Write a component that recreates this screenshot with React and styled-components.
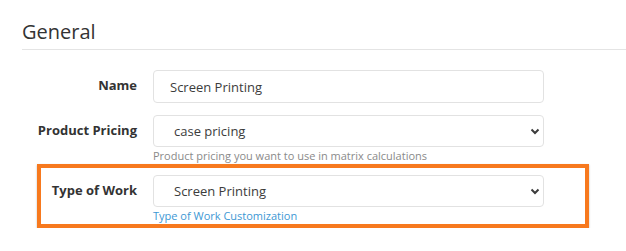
import React from 'react';
import styled, { createGlobalStyle } from 'styled-components';

const GlobalStyle = createGlobalStyle`
  body {
    margin: 0;
    background: #fff;
    font-family: "Open Sans", Lato, sans-serif;
    color: #333;
  }
`;

const Section = styled.section`
  padding: 20px 0 0 22px;
  width: 604px;
`;

const Header = styled.div`
  border-bottom: 1px solid #e4e4e4;
  padding-bottom: 5px;
`;

const Title = styled.h2`
  margin: 0;
  font-size: 20px;
  font-weight: 400;
  line-height: 24px;
  color: #333;
`;

const Fields = styled.div`
  display: flex;
  flex-direction: column;
  padding-top: 20px;
`;

const Row = styled.div`
  display: grid;
  grid-template-columns: ${p => p.$labelWidth}px 391px;
  column-gap: 16px;
  margin-bottom: ${p => p.$gap || 0}px;
`;

const Label = styled.label`
  text-align: right;
  font-size: 13px;
  font-weight: 700;
  color: #333;
  line-height: 30px;
`;

const Control = styled.div`
  display: flex;
  flex-direction: column;
`;

const Input = styled.input`
  box-sizing: border-box;
  height: 33px;
  width: 100%;
  border: 1px solid #e2e2e2;
  border-radius: 4px;
  padding: 0 0 0 16px;
  font-family: inherit;
  font-size: 13px;
  color: #3c3c3c;
  background: #fff;
  outline: none;
`;

const SelectWrap = styled.div`
  position: relative;
`;

const Select = styled.select`
  box-sizing: border-box;
  appearance: none;
  height: 32px;
  width: 100%;
  border: 1px solid #e2e2e2;
  border-radius: 4px;
  padding: 0 0 0 20px;
  font-family: inherit;
  font-size: 13px;
  color: #3c3c3c;
  background: #fff;
  outline: none;
`;

const Chevron = styled.svg`
  position: absolute;
  right: 4px;
  top: 13px;
  pointer-events: none;
`;

const Help = styled.div`
  font-size: 11px;
  line-height: 14px;
  margin-top: 2px;
  color: ${p => (p.$link ? '#3d98d4' : '#8a8a8a')};
`;

const Highlight = styled.div`
  margin: 1px 0 0 15px;
  width: 544px;
  border: 4px solid #f7791e;
  box-shadow: 0 1px 2px rgba(0, 0, 0, 0.25);
  padding: 7px 0 1px;
`;

const Caret = () => (
  <Chevron width="10" height="7" viewBox="0 0 10 7">
    <path d="M1.5 1.5 L5 5 L8.5 1.5" fill="none" stroke="#3c3c3c" strokeWidth="2" />
  </Chevron>
);

const SelectField = ({ value }) => (
  <SelectWrap>
    <Select defaultValue={value}>
      <option>{value}</option>
    </Select>
    <Caret />
  </SelectWrap>
);

export default function App() {
  return (
    <>
      <GlobalStyle />
      <Section>
        <Header>
          <Title>General</Title>
        </Header>
        <Fields>
          <Row $labelWidth={115} $gap={12}>
            <Label>Name</Label>
            <Input defaultValue="Screen Printing" />
          </Row>
          <Row $labelWidth={115}>
            <Label>Product Pricing</Label>
            <Control>
              <SelectField value="case pricing" />
              <Help>Product pricing you want to use in matrix calculations</Help>
            </Control>
          </Row>
          <Highlight>
            <Row $labelWidth={96}>
              <Label>Type of Work</Label>
              <Control>
                <SelectField value="Screen Printing" />
                <Help $link>Type of Work Customization</Help>
              </Control>
            </Row>
          </Highlight>
        </Fields>
      </Section>
    </>
  );
}
